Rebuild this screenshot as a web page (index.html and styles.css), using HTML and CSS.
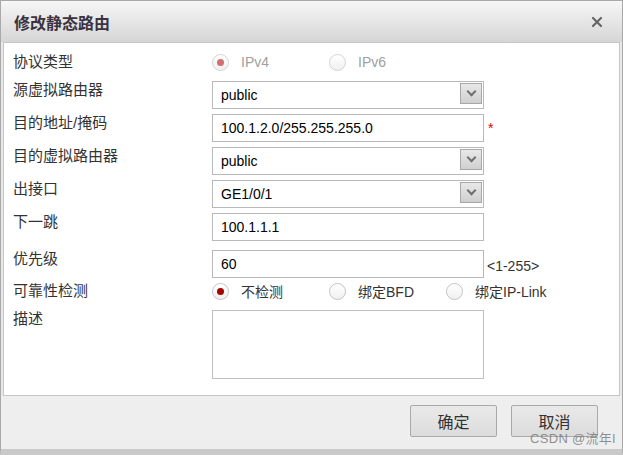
FILE: index.html
```html
<!DOCTYPE html>
<html lang="zh-CN">
<head>
  <meta charset="UTF-8">
  <title>修改静态路由</title>
  <link rel="stylesheet" href="styles.css">
</head>
<body>

<div class="dialog">
  <div class="titlebar">
    <span class="title">修改静态路由</span>
    <svg class="close" width="12" height="12" viewBox="0 0 12 12">
      <path d="M2 2 L10 10 M10 2 L2 10" stroke="#666" stroke-width="2.2" stroke-linecap="round"/>
    </svg>
  </div>

  <div class="panel">
    <!-- protocol -->
    <div class="row row-first">
      <div class="label">协议类型</div>
      <div class="radios">
        <span class="option disabled"><span class="radio checked"></span>IPv4</span>
        <span class="option disabled"><span class="radio"></span>IPv6</span>
      </div>
    </div>

    <div class="row">
      <div class="label">源虚拟路由器</div>
      <div class="combo">public<span class="arrow"></span></div>
    </div>

    <div class="row">
      <div class="label">目的地址/掩码</div>
      <input class="field" type="text" value="100.1.2.0/255.255.255.0">
      <span class="required">*</span>
    </div>

    <div class="row">
      <div class="label">目的虚拟路由器</div>
      <div class="combo">public<span class="arrow"></span></div>
    </div>

    <div class="row">
      <div class="label">出接口</div>
      <div class="combo">GE1/0/1<span class="arrow"></span></div>
    </div>

    <div class="row">
      <div class="label">下一跳</div>
      <input class="field" type="text" value="100.1.1.1">
    </div>

    <div class="row row-gap">
      <div class="label">优先级</div>
      <input class="field" type="text" value="60">
      <span class="hint">&lt;1-255&gt;</span>
    </div>

    <!-- reliability -->
    <div class="row row-check">
      <div class="label">可靠性检测</div>
      <div class="radios">
        <span class="option"><span class="radio checked"></span>不检测</span>
        <span class="option"><span class="radio"></span>绑定BFD</span>
        <span class="option"><span class="radio"></span>绑定IP-Link</span>
      </div>
    </div>

    <div class="row row-desc">
      <div class="label">描述</div>
      <textarea class="desc"></textarea>
    </div>
  </div>

  <div class="footer">
    <button class="btn">确定</button>
    <button class="btn">取消</button>
  </div>

  <div class="watermark">CSDN @流年I</div>
</div>

</body>
</html>
```

FILE: styles.css
```css
body {
  margin: 0;
  font-family: "Liberation Sans", "Noto Sans CJK SC", sans-serif;
  color: #333;
}

.dialog {
  position: relative;
  width: 623px;
  height: 455px;
  box-sizing: border-box;
  border: 1px solid #a9a9a9;
  border-bottom: 6px solid #c9c9c9;
  background: #e9e9e9;
  display: flex;
  flex-direction: column;
}

.titlebar {
  height: 41px;
  display: flex;
  align-items: center;
  justify-content: space-between;
  padding: 0 19px 0 13px;
  background: linear-gradient(#f6f6f6, #d6d6d6);
  flex-shrink: 0;
}

.title {
  font-size: 16px;
  font-weight: bold;
  color: #3b3340;
}

.panel {
  height: 352px;
  margin: 0 2px;
  background: #fff;
  border: 1px solid #c6c6c6;
  padding-left: 9px;
  flex-shrink: 0;
}

.row {
  display: flex;
  align-items: flex-start;
  height: 33px;
}

.row-first {
  height: 38px;
  align-items: center;
}

.row-gap {
  margin-top: 4px;
  height: 31px;
}

.row-check {
  height: 20px;
  align-items: center;
}

.row-desc {
  height: auto;
}

.label {
  width: 199px;
  flex-shrink: 0;
  font-size: 15px;
  line-height: 18px;
  padding-top: 0;
  color: #333;
}

.row-desc .label {
  padding-top: 9px;
}

.field,
.combo {
  width: 272px;
  height: 28px;
  box-sizing: border-box;
  border: 1px solid #b9b9b9;
  padding: 0 8px;
  font-family: "Liberation Sans", sans-serif;
  font-size: 14px;
  color: #000;
  margin: 0;
  outline: none;
}

.combo {
  position: relative;
  line-height: 26px;
}

.arrow {
  position: absolute;
  right: 1px;
  top: 1px;
  width: 22px;
  height: 21px;
  box-sizing: border-box;
  border: 1px solid #a8a8a8;
  background: linear-gradient(#e8e8e8, #d0d0d0);
}

.arrow::after {
  content: "";
  position: absolute;
  left: 7px;
  top: 4px;
  width: 5px;
  height: 5px;
  border-right: 2px solid #707070;
  border-bottom: 2px solid #707070;
  transform: rotate(45deg);
}

.required {
  color: #e00;
  font-size: 14px;
  margin: 6px 0 0 4px;
}

.hint {
  font-size: 14px;
  color: #333;
  margin: 8px 0 0 3px;
}

.radios {
  display: flex;
  align-items: center;
}

.option {
  width: 117px;
  display: flex;
  align-items: center;
  font-size: 14px;
  color: #333;
}

.option.disabled {
  color: #a0a0a0;
}

.radio {
  width: 17px;
  height: 17px;
  box-sizing: border-box;
  border: 1px solid #c4c4c4;
  border-radius: 50%;
  background: linear-gradient(#fff, #f0f0f0);
  margin-right: 12px;
  position: relative;
}

.disabled .radio {
  border-color: #d4d4d4;
}

.radio.checked::after {
  content: "";
  position: absolute;
  left: 4px;
  top: 4px;
  width: 7px;
  height: 7px;
  border-radius: 50%;
  background: #a30000;
}

.disabled .radio.checked::after {
  background: #cf6f6f;
}

.desc {
  width: 272px;
  height: 69px;
  box-sizing: border-box;
  border: 1px solid #c0c0c0;
  margin-top: 9px;
  resize: none;
  outline: none;
}

.footer {
  flex: 1;
  display: flex;
  justify-content: flex-end;
  align-items: flex-start;
  gap: 14px;
  padding: 9px 24px 0 0;
  background: #eeeeee;
}

.btn {
  width: 87px;
  height: 32px;
  border: 1px solid #a9a9a9;
  border-radius: 2px;
  background: linear-gradient(#e9e9e9, #dcdcdc);
  font-family: "Noto Sans CJK SC", sans-serif;
  font-size: 16px;
  color: #333;
  padding: 0;
  cursor: pointer;
}

.watermark {
  position: absolute;
  right: 6px;
  bottom: 2px;
  font-size: 13px;
  color: rgba(110, 110, 110, 0.75);
  letter-spacing: 0.3px;
}
```
